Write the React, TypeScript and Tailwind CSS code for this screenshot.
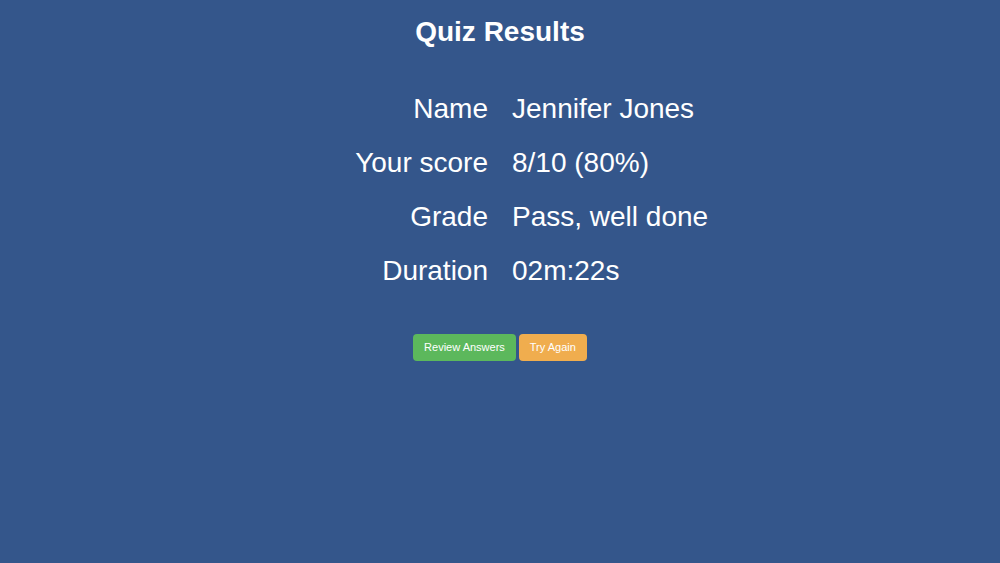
const results = [
  { label: 'Name', value: 'Jennifer Jones' },
  { label: 'Your score', value: '8/10 (80%)' },
  { label: 'Grade', value: 'Pass, well done' },
  { label: 'Duration', value: '02m:22s' },
];

export default function App() {
  return (
    <main className="min-h-[563px] w-full bg-[#34568b] text-white font-['Liberation_Sans',Arial,sans-serif]">
      <h1 className="pt-[16px] text-center text-[28px] leading-[32px] font-bold">Quiz Results</h1>

      <div className="mt-[45px] grid grid-cols-2 gap-x-6 gap-y-[22px]">
        {results.map((row) => (
          <div key={row.label} className="contents">
            <div className="text-right text-[28px] leading-[32px]">{row.label}</div>
            <div className="text-left text-[28px] leading-[32px]">{row.value}</div>
          </div>
        ))}
      </div>

      <div className="mt-[47px] flex justify-center gap-[3px]">
        <button className="h-[27px] rounded-[4px] bg-[#5cb85c] px-[11px] text-[11px] text-white">
          Review Answers
        </button>
        <button className="h-[27px] rounded-[4px] bg-[#f0ad4e] px-[11px] text-[11px] text-white">
          Try Again
        </button>
      </div>
    </main>
  );
}
